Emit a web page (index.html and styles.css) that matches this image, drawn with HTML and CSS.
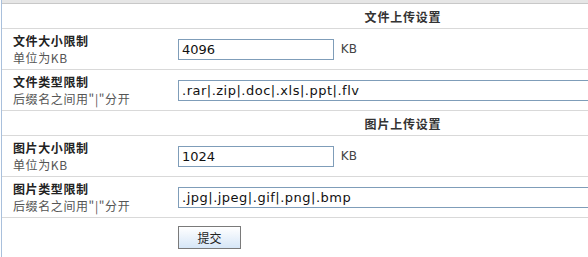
FILE: index.html
```html
<!DOCTYPE html>
<html lang="zh-CN">
<head>
    <meta charset="UTF-8">
    <title>上传设置</title>
    <link rel="stylesheet" href="styles.css">
</head>
<body>
    <div class="page">
        <div class="top-bar"></div>
        <table class="settings">
            <colgroup>
                <col class="col-label">
                <col>
            </colgroup>
            <tr class="section">
                <td></td>
                <td class="section-title">文件上传设置</td>
            </tr>
            <tr>
                <td class="label">
                    <strong>文件大小限制</strong>
                    <span>单位为KB</span>
                </td>
                <td class="field">
                    <input type="text" class="short-input" value="4096"> KB
                </td>
            </tr>
            <tr>
                <td class="label">
                    <strong>文件类型限制</strong>
                    <span>后缀名之间用"|"分开</span>
                </td>
                <td class="field">
                    <input type="text" class="long-input" value=".rar|.zip|.doc|.xls|.ppt|.flv">
                </td>
            </tr>
            <tr class="section">
                <td></td>
                <td class="section-title">图片上传设置</td>
            </tr>
            <tr>
                <td class="label">
                    <strong>图片大小限制</strong>
                    <span>单位为KB</span>
                </td>
                <td class="field">
                    <input type="text" class="short-input" value="1024"> KB
                </td>
            </tr>
            <tr>
                <td class="label">
                    <strong>图片类型限制</strong>
                    <span>后缀名之间用"|"分开</span>
                </td>
                <td class="field">
                    <input type="text" class="long-input" value=".jpg|.jpeg|.gif|.png|.bmp">
                </td>
            </tr>
            <tr class="actions">
                <td></td>
                <td><button type="button" class="submit-btn">提交</button></td>
            </tr>
        </table>
    </div>
</body>
</html>
```

FILE: styles.css
```css
body {
    margin: 0;
    background-color: #fff;
    font-family: "DejaVu Sans", "Noto Sans CJK SC", sans-serif;
    font-size: 12px;
    color: #333;
    overflow: hidden;
}

.page {
    border-left: 1px solid #a9c0dc;
    margin-left: 1px;
    min-height: 257px;
    overflow: hidden;
}

.top-bar {
    height: 3px;
    background-color: #e6e6e6;
    border-bottom: 1px solid #c8c8c8;
}

.settings {
    width: 100%;
    border-collapse: collapse;
    table-layout: fixed;
}

.col-label {
    width: 176px;
}

.settings td {
    border-bottom: 1px solid #d9d9d9;
    padding: 0;
    vertical-align: middle;
}

.section td {
    height: 24px;
}

.section-title {
    font-family: "Noto Sans CJK SC", sans-serif;
    font-weight: bold;
    font-size: 12px;
    letter-spacing: 0.8px;
    color: #333;
    padding-left: 40px !important;
    text-align: center;
}

.label {
    height: 40px;
    padding-left: 11px !important;
    font-family: "Noto Sans CJK SC", sans-serif;
    font-size: 12px;
    letter-spacing: 0.6px;
    line-height: 17px;
    white-space: nowrap;
}

.label strong {
    display: block;
    color: #222;
}

.label span {
    display: block;
    color: #555;
}

.field {
    color: #444;
    white-space: nowrap;
    overflow: hidden;
}

/* Text inputs */
.field input {
    font-family: "DejaVu Sans", sans-serif;
    font-size: 13px;
    color: #111;
    height: 21px;
    padding: 0 3px;
    border: 1px solid #7f9db9;
    box-sizing: border-box;
    margin: 0 3px 0 0;
    vertical-align: middle;
}

.short-input {
    width: 156px;
}

.long-input {
    width: 440px;
    letter-spacing: 0.5px;
}

.actions td {
    border-bottom: none;
    height: 38px;
}

.submit-btn {
    width: 63px;
    height: 23px;
    font-family: "Noto Sans CJK SC", sans-serif;
    font-size: 12px;
    color: #222;
    border: 1px solid #7a7a7a;
    background: linear-gradient(#ffffff, #d6e6f7);
    cursor: pointer;
}
```
